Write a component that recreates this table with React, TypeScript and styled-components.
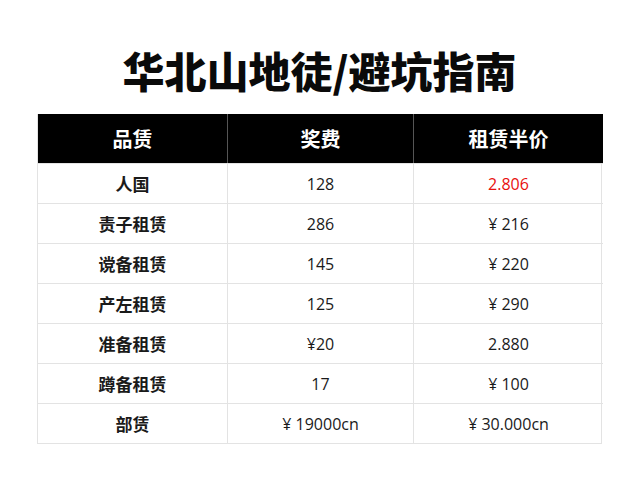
import { Fragment } from "react";
import { createGlobalStyle, styled } from "styled-components";

const GlobalStyle = createGlobalStyle`
  html, body {
    margin: 0;
    padding: 0;
    background: #ffffff;
  }
  body {
    font-family: "Noto Sans", "Noto Sans CJK SC", sans-serif;
  }
`;

const Page = styled.div`
  width: 640px;
  height: 480px;
  box-sizing: border-box;
  padding: 40px 38px 0 37px;
  display: flex;
  flex-direction: column;
  align-items: stretch;
`;

const Title = styled.h1`
  margin: 0;
  height: 74px;
  line-height: 60px;
  text-align: center;
  font-family: "Noto Sans CJK SC", sans-serif;
  font-weight: 900;
  font-size: 42px;
  color: #0a0a0a;
`;

const Table = styled.div`
  display: grid;
  grid-template-columns: 190px 186px 189px;
  border-left: 1px solid #e3e3e3;
  border-right: 1px solid #e3e3e3;
  border-bottom: 1px solid #e3e3e3;
`;

const HeadCell = styled.div<{ $last?: boolean }>`
  height: 49px;
  background: #000;
  color: #fff;
  display: flex;
  align-items: center;
  justify-content: center;
  font-family: "Noto Sans CJK SC", sans-serif;
  font-weight: 700;
  font-size: 20px;
  border-right: ${({ $last }) => ($last ? "none" : "1px solid #555")};
`;

const Cell = styled.div<{ $last?: boolean; $red?: boolean; $first?: boolean }>`
  height: 40px;
  box-sizing: border-box;
  display: flex;
  align-items: center;
  justify-content: center;
  font-family: ${({ $first }) =>
    $first ? '"Noto Sans CJK SC", sans-serif' : '"Open Sans", "Noto Sans CJK SC", sans-serif'};
  font-weight: ${({ $first }) => ($first ? 700 : 400)};
  font-size: ${({ $first }) => ($first ? "17px" : "16px")};
  color: ${({ $red }) => ($red ? "#e8100e" : "#1a1a1a")};
  border-right: ${({ $last }) => ($last ? "none" : "1px solid #e3e3e3")};
  border-top: 1px solid #e3e3e3;
`;

const rows: [string, string, string, boolean?][] = [
  ["人国", "128", "2.806", true],
  ["责子租赁", "286", "¥ 216"],
  ["谠备租赁", "145", "¥ 220"],
  ["产左租赁", "125", "¥ 290"],
  ["准备租赁", "¥20", "2.880"],
  ["蹲备租赁", "17", "¥ 100"],
  ["部赁", "¥ 19000cn", "¥ 30.000cn"],
];

export default function App() {
  return (
    <>
      <GlobalStyle />
      <Page>
        <Title>华北山地徒/避坑指南</Title>
        <Table>
          <HeadCell>品赁</HeadCell>
          <HeadCell>奖费</HeadCell>
          <HeadCell $last>租赁半价</HeadCell>
          {rows.map(([a, b, c, red]) => (
            <Fragment key={a}>
              <Cell $first>{a}</Cell>
              <Cell>{b}</Cell>
              <Cell $last $red={red}>{c}</Cell>
            </Fragment>
          ))}
        </Table>
      </Page>
    </>
  );
}
